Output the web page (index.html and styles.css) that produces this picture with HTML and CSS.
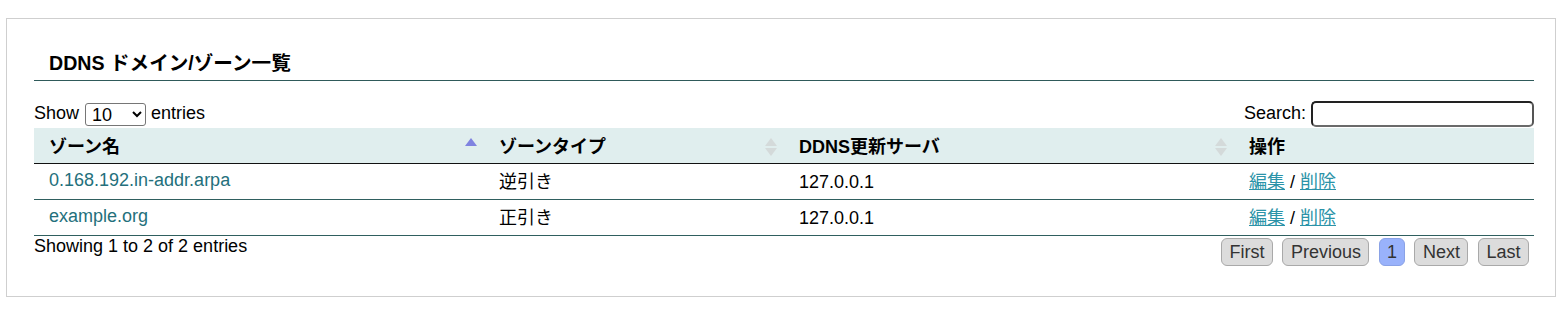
FILE: index.html
```html
<!DOCTYPE html>
<html lang="ja">

<head>
	<meta charset="UTF-8">
	<meta name="viewport" content="width=device-width, initial-scale=1.0">
	<title>DDNS ドメイン/ゾーン一覧</title>
	<link rel="stylesheet" href="styles.css">
</head>

<body>
	<div class="box">
		<h2 class="title">DDNS ドメイン/ゾーン一覧</h2>

		<!-- 表の上の操作 -->
		<div class="controls">
			<label class="length">Show
				<select>
					<option>10</option>
					<option>25</option>
					<option>50</option>
					<option>100</option>
				</select>
				entries</label>
			<label class="search">Search:<input type="search"></label>
		</div>

		<table class="list">
			<thead>
				<tr>
					<th class="w1">ゾーン名
						<svg class="sort" width="14" height="22" viewBox="0 0 14 22"><path d="M1 10 L7 2 L13 10 Z" fill="#7f83e0"/></svg>
					</th>
					<th class="w2">ゾーンタイプ
						<svg class="sort" width="14" height="22" viewBox="0 0 14 22"><path d="M1 10 L7 2 L13 10 Z" fill="#d4dada"/><path d="M1 12 L7 20 L13 12 Z" fill="#d4dada"/></svg>
					</th>
					<th class="w1">DDNS更新サーバ
						<svg class="sort" width="14" height="22" viewBox="0 0 14 22"><path d="M1 10 L7 2 L13 10 Z" fill="#d4dada"/><path d="M1 12 L7 20 L13 12 Z" fill="#d4dada"/></svg>
					</th>
					<th class="w2">操作</th>
				</tr>
			</thead>
			<tbody>
				<tr>
					<td class="zone">0.168.192.in-addr.arpa</td>
					<td>逆引き</td>
					<td>127.0.0.1</td>
					<td><a href="#">編集</a> / <a href="#">削除</a></td>
				</tr>
				<tr>
					<td class="zone">example.org</td>
					<td>正引き</td>
					<td>127.0.0.1</td>
					<td><a href="#">編集</a> / <a href="#">削除</a></td>
				</tr>
			</tbody>
		</table>

		<div class="footer">
			<div class="info">Showing 1 to 2 of 2 entries</div>
			<div class="paging">
				<a class="btn" href="#">First</a>
				<a class="btn" href="#">Previous</a>
				<a class="btn current" href="#">1</a>
				<a class="btn" href="#">Next</a>
				<a class="btn" href="#">Last</a>
			</div>
		</div>
	</div>
</body>

</html>
```

FILE: styles.css
```css
* {
	margin: 0;
	padding: 0;
	box-sizing: border-box;
}

body {
	font-family: "Liberation Sans", "Noto Sans CJK JP", sans-serif;
	font-size: 18px;
	color: #000;
	background: #fff;
}

.box {
	width: 1550px;
	height: 279px;
	margin: 18px 0 0 6px;
	padding: 0 21px 0 27px;
	border: 1px solid #cfcfcf;
}

.title {
	margin-top: 33px;
	padding: 0 15px 6px;
	font-size: 19.6px;
	line-height: 22px;
	font-weight: bold;
	border-bottom: 1px solid #2f5a5a;
}

/* 表の上 */
.controls {
	display: flex;
	justify-content: space-between;
	align-items: center;
	margin-top: 20px;
	margin-bottom: 1px;
	height: 26px;
	line-height: 20px;
}

.length select {
	width: 61px;
	height: 23px;
	margin: 0 0 0 1px;
	padding: 0 2px;
	font-family: inherit;
	font-size: 18px;
	border: 1px solid #767676;
	border-radius: 3px;
	background: #fff;
	vertical-align: middle;
}

.search input {
	width: 223px;
	height: 26px;
	margin-left: 5px;
	border: 2px solid #222;
	border-bottom-color: #6a6a6a;
	border-right-color: #555;
	border-radius: 5px;
	vertical-align: middle;
}

/* 表 */
.list {
	width: 1500px;
	border-collapse: collapse;
	table-layout: fixed;
}

.list th {
	height: 35px;
	padding: 3px 15px 0;
	text-align: left;
	font-weight: bold;
	background: #e0eeee;
	border-bottom: 1px solid #111;
	line-height: 22px;
}

.list .w1 {
	width: 450px;
}

.list .w2 {
	width: 300px;
}

.list th .sort {
	float: right;
	margin: 0 -9px 0 0;
}

.list td {
	height: 36px;
	padding: 1px 15px 0;
	border-bottom: 1px solid #2f5f5f;
	line-height: 22px;
	vertical-align: middle;
}

.list td.zone {
	color: #24707c;
	padding: 0 15px 3px;
}

.list td a {
	color: #2b93a8;
	text-decoration: underline;
}

/* 表の下 */
.footer {
	display: flex;
	justify-content: space-between;
	align-items: flex-start;
	line-height: 20px;
}

.paging {
	display: flex;
	gap: 9.5px;
	margin: 2px 5px 0 0;
}

.btn {
	display: block;
	height: 28px;
	line-height: 26px;
	padding: 0 7.5px;
	color: #333;
	text-decoration: none;
	background: #dcdcdc;
	border: 1px solid #a9a9a9;
	border-radius: 6px;
}

.btn.current {
	padding: 0 7px;
	background: #99b2fb;
	border-color: #8aa2e6;
}
```
